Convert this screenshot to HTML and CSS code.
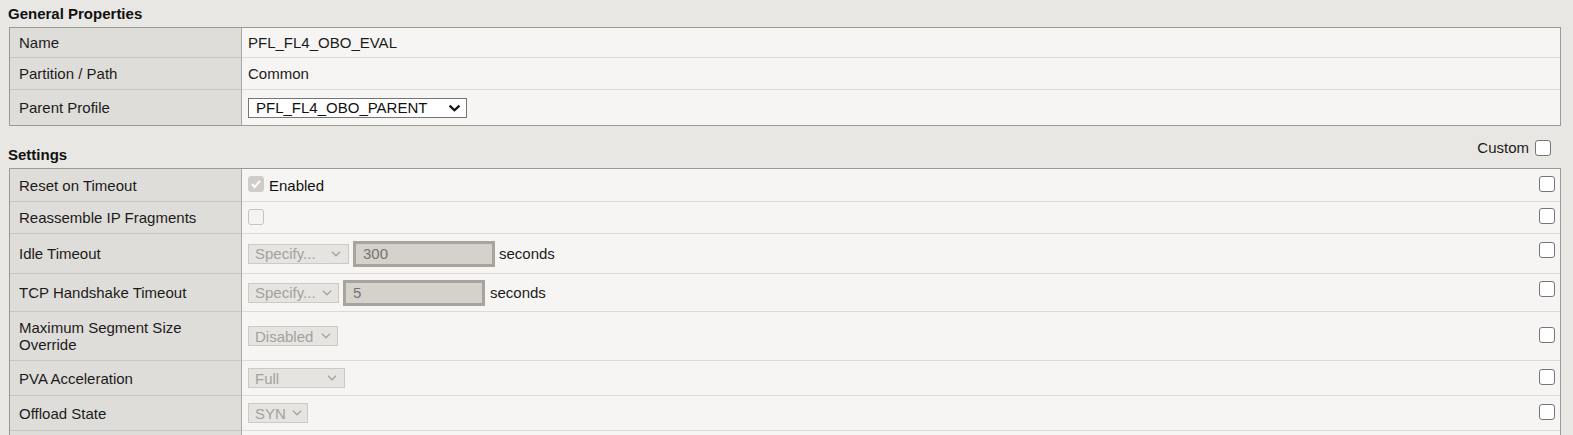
FILE: index.html
```html
<!DOCTYPE html>
<html lang="en">
<head>
<meta charset="utf-8">
<title>Profile Properties</title>
<link rel="stylesheet" href="styles.css">
</head>
<body>
<div class="page">
  <div class="section-head head-general">
    <h2 class="section-title">General Properties</h2>
  </div>
  <div class="table">
    <div class="row h30">
      <div class="label">Name</div>
      <div class="value">PFL_FL4_OBO_EVAL</div>
    </div>
    <div class="row h32">
      <div class="label">Partition / Path</div>
      <div class="value">Common</div>
    </div>
    <div class="row h35 last">
      <div class="label">Parent Profile</div>
      <div class="value">
        <div class="select select-parent">
          <span>PFL_FL4_OBO_PARENT</span>
          <svg width="13" height="8" viewBox="0 0 13 8"><path d="M1.6 1.6 L6.5 6.3 L11.4 1.6" fill="none" stroke="#111" stroke-width="2.2"/></svg>
        </div>
      </div>
    </div>
  </div>

  <div class="section-head head-settings">
    <h2 class="section-title settings-title">Settings</h2>
    <div class="custom">
      <span>Custom</span>
      <span class="cb"></span>
    </div>
  </div>
  <div class="table">
    <div class="row h33">
      <div class="label">Reset on Timeout</div>
      <div class="value">
        <div class="field">
          <span class="cb cb-disabled cb-checked">
            <svg width="14" height="14" viewBox="0 0 14 14"><path d="M3 7.2 L5.8 10 L11 3.8" fill="none" stroke="#fff" stroke-width="2"/></svg>
          </span>
          <span class="enabled">Enabled</span>
        </div>
        <span class="cb cb-right"></span>
      </div>
    </div>
    <div class="row h32">
      <div class="label">Reassemble IP Fragments</div>
      <div class="value">
        <div class="field">
          <span class="cb cb-disabled"></span>
        </div>
        <span class="cb cb-right"></span>
      </div>
    </div>
    <div class="row h40">
      <div class="label">Idle Timeout</div>
      <div class="value">
        <div class="field">
          <div class="select select-off w-idle">
            <span>Specify...</span>
            <svg width="10" height="6" viewBox="0 0 10 6"><path d="M1 0.8 L5 4.8 L9 0.8" fill="none" stroke="#a6a4a0" stroke-width="1.3"/></svg>
          </div>
          <input class="num" type="text" value="300" disabled>
          <span class="unit">seconds</span>
        </div>
        <span class="cb cb-right cb-up"></span>
      </div>
    </div>
    <div class="row h38">
      <div class="label">TCP Handshake Timeout</div>
      <div class="value">
        <div class="field">
          <div class="select select-off w-tcp">
            <span>Specify...</span>
            <svg width="10" height="6" viewBox="0 0 10 6"><path d="M1 0.8 L5 4.8 L9 0.8" fill="none" stroke="#a6a4a0" stroke-width="1.3"/></svg>
          </div>
          <input class="num" type="text" value="5" disabled>
          <span class="unit unit-wide">seconds</span>
        </div>
        <span class="cb cb-right cb-up"></span>
      </div>
    </div>
    <div class="row h49">
      <div class="label">Maximum Segment Size<br>Override</div>
      <div class="value">
        <div class="field">
          <div class="select select-off w-dis">
            <span>Disabled</span>
            <svg width="10" height="6" viewBox="0 0 10 6"><path d="M1 0.8 L5 4.8 L9 0.8" fill="none" stroke="#a6a4a0" stroke-width="1.3"/></svg>
          </div>
        </div>
        <span class="cb cb-right"></span>
      </div>
    </div>
    <div class="row h35">
      <div class="label">PVA Acceleration</div>
      <div class="value">
        <div class="field">
          <div class="select select-off w-full">
            <span>Full</span>
            <svg width="10" height="6" viewBox="0 0 10 6"><path d="M1 0.8 L5 4.8 L9 0.8" fill="none" stroke="#a6a4a0" stroke-width="1.3"/></svg>
          </div>
        </div>
        <span class="cb cb-right"></span>
      </div>
    </div>
    <div class="row h35">
      <div class="label">Offload State</div>
      <div class="value">
        <div class="field">
          <div class="select select-off w-syn">
            <span>SYN</span>
            <svg width="10" height="6" viewBox="0 0 10 6"><path d="M1 0.8 L5 4.8 L9 0.8" fill="none" stroke="#a6a4a0" stroke-width="1.3"/></svg>
          </div>
        </div>
        <span class="cb cb-right"></span>
      </div>
    </div>
    <div class="row h35 last">
      <div class="label"></div>
      <div class="value"></div>
    </div>
  </div>
</div>
</body>
</html>
```

FILE: styles.css
```css
html, body {
  margin: 0;
  padding: 0;
  overflow: hidden;
  background: #e9e7e3;
}

body {
  font-family: "Liberation Sans", Arial, sans-serif;
  font-size: 15px;
  line-height: 17px;
  color: #1b1b1b;
}

.page {
  width: 1573px;
}

.section-head {
  display: flex;
  justify-content: space-between;
  align-items: flex-start;
  box-sizing: border-box;
  padding: 0 22px 0 8px;
}

.head-general {
  height: 27px;
  align-items: center;
}

.head-settings {
  height: 42px;
}

.section-title {
  margin: 0;
  font-size: 15px;
  line-height: 17px;
  font-weight: bold;
  color: #111;
}

.settings-title {
  margin-top: 20px;
}

.custom {
  margin-top: 13px;
  display: flex;
  align-items: center;
  gap: 6px;
  color: #1b1b1b;
}

.table {
  margin: 0 12px 0 9px;
  border: 1px solid #9c9a96;
  background: #f6f5f3;
}

.row {
  display: flex;
  box-sizing: border-box;
}

.h30 { height: 30px; }
.h32 { height: 32px; }
.h33 { height: 33px; }
.h35 { height: 35px; }
.h38 { height: 38px; }
.h40 { height: 40px; }
.h49 { height: 49px; }

.label {
  width: 232px;
  flex: none;
  box-sizing: border-box;
  padding: 0 10px 0 9px;
  background: #dfddd9;
  border-right: 1px solid #a9a7a3;
  border-bottom: 1px solid #c8c6c2;
  display: flex;
  align-items: center;
}

.value {
  flex: 1;
  box-sizing: border-box;
  padding: 0 5px 0 6px;
  border-bottom: 1px solid #dddbd7;
  display: flex;
  align-items: center;
  justify-content: space-between;
}

.row.last .label,
.row.last .value {
  border-bottom: none;
}

.field {
  display: flex;
  align-items: center;
}

.select {
  display: flex;
  align-items: center;
  justify-content: space-between;
  box-sizing: border-box;
  height: 20px;
  border: 1px solid;
  white-space: nowrap;
}

.select-parent {
  width: 219px;
  border-color: #767676;
  background: #fff;
  color: #111;
  padding: 0 5px 0 7px;
}

.select-off {
  border-color: #cdcac5;
  background: #e6e4e0;
  color: #a3a19d;
  padding: 0 7px 0 6px;
}

.w-idle { width: 101px; }
.w-tcp { width: 91px; padding-right: 6px; }
.w-dis { width: 90px; padding-right: 6px; }
.w-full { width: 97px; }
.w-syn { width: 60px; padding-right: 5px; }

.num {
  width: 142px;
  height: 26px;
  box-sizing: border-box;
  margin: 0 0 0 4px;
  border: 3px solid #a8a39c;
  background: #d5d1cb;
  padding: 0 0 0 7px;
  font: inherit;
  color: #77736e;
  -webkit-text-fill-color: #77736e;
  opacity: 1;
  outline: none;
}

.unit {
  margin-left: 4px;
}

.unit-wide {
  margin-left: 5px;
}

.cb {
  display: inline-flex;
  align-items: center;
  justify-content: center;
  width: 16px;
  height: 16px;
  box-sizing: border-box;
  border: 1px solid #767676;
  border-radius: 3px;
  background: #fff;
  flex: none;
}

.cb-right {
  margin-bottom: 3px;
}

.cb-up {
  margin-bottom: 8px;
}

.cb-disabled {
  border-color: #c6c4c0;
  background: #f4f3f1;
  margin-bottom: 2px;
}

.cb-checked {
  background: #cfcdc9;
  border-color: #cfcdc9;
}

.enabled {
  margin-left: 5px;
  color: #111;
}
```
